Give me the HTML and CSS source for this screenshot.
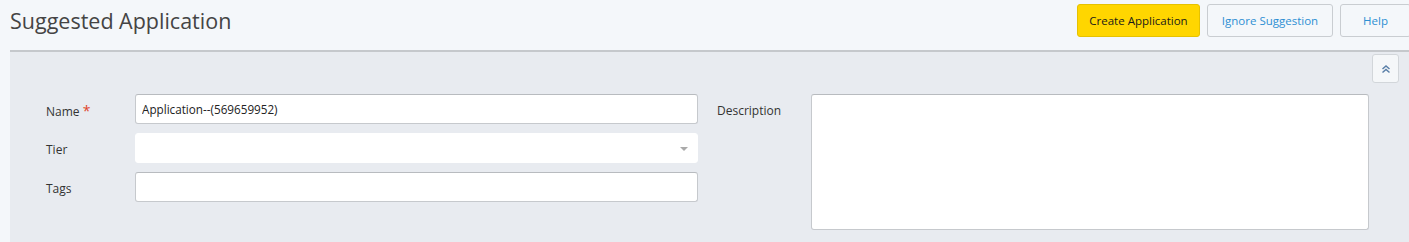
FILE: index.html
```html
<!DOCTYPE html>
<html lang="en">
<head>
    <meta charset="UTF-8">
    <title>Suggested Application</title>
    <link rel="stylesheet" href="styles.css">
</head>
<body>
    <div class="page-header">
        <h1>Suggested Application</h1>
        <div class="actions">
            <button class="btn btn-primary">Create Application</button>
            <button class="btn btn-default">Ignore Suggestion</button>
            <button class="btn btn-default btn-help">Help</button>
        </div>
    </div>

    <div class="panel">
        <div class="panel-tools">
            <button class="collapse-btn" title="Collapse">
                <svg width="10" height="10" viewBox="0 0 10 10">
                    <path d="M1.5 5 L5 2 L8.5 5" fill="none" stroke="#5a7fa8" stroke-width="1.5"/>
                    <path d="M1.5 8.5 L5 5.5 L8.5 8.5" fill="none" stroke="#5a7fa8" stroke-width="1.5"/>
                </svg>
            </button>
        </div>
        <form class="app-form">
            <div class="col col-left">
                <div class="field">
                    <label for="name">Name <span class="req">*</span></label>
                    <input type="text" id="name" value="Application--(569659952)">
                </div>
                <div class="field">
                    <label for="tier">Tier</label>
                    <div class="select">
                        <span class="caret"></span>
                    </div>
                </div>
                <div class="field">
                    <label for="tags">Tags</label>
                    <input type="text" id="tags">
                </div>
            </div>
            <div class="col col-right">
                <div class="field">
                    <label for="description">Description</label>
                    <textarea id="description"></textarea>
                </div>
            </div>
        </form>
    </div>
</body>
</html>
```

FILE: styles.css
```css
body {
    margin: 0;
    background-color: #f4f7fa;
    font-family: "Open Sans", Arial, sans-serif;
    color: #333;
    overflow: hidden;
}

.page-header {
    display: flex;
    justify-content: space-between;
    align-items: flex-start;
    height: 50px;
    padding-left: 10px;
}

h1 {
    margin: 7px 0 0;
    font-size: 21.5px;
    font-weight: 400;
    color: #444;
    line-height: 28px;
}

.actions {
    display: flex;
    gap: 7px;
    padding-top: 4px;
    margin-right: -2px;
}

.btn {
    height: 33px;
    padding: 0;
    border-radius: 3px;
    font-family: "Open Sans", Arial, sans-serif;
    font-size: 11.5px;
    white-space: nowrap;
    cursor: pointer;
}

.btn-primary {
    width: 123px;
    background-color: #ffd600;
    border: 1px solid #e6c200;
    color: #1a1a1a;
}

.btn-default {
    width: 126px;
    background-color: #f4f7fa;
    border: 1px solid #c9cdd1;
    color: #2d8fd3;
}

.btn-help {
    width: 71px;
}

.panel {
    margin-left: 10px;
    border-top: 2px solid #c5c8cc;
    background-color: #e8ebf0;
    height: 200px;
}

.panel-tools {
    display: flex;
    justify-content: flex-end;
    padding: 2px 10px 0 0;
}

.collapse-btn {
    display: flex;
    align-items: center;
    justify-content: center;
    width: 27px;
    height: 29px;
    padding: 0;
    background-color: #f5f7f9;
    border: 1px solid #d2d6da;
    border-radius: 3px;
}

.app-form {
    display: flex;
    gap: 19px;
    padding: 11px 40px 0 36px;
}

.col {
    display: flex;
    flex-direction: column;
    gap: 9px;
}

.col-left {
    width: 652px;
}

.col-right {
    flex: 1;
}

.field {
    display: flex;
    align-items: flex-start;
}

label {
    height: 30px;
    font-size: 12px;
    line-height: 34px;
    color: #333;
}

.col-left label {
    width: 89px;
    flex-shrink: 0;
}

.col-right label {
    width: 94px;
    flex-shrink: 0;
}

.req {
    color: #e0452b;
    font-size: 14px;
}

input, .select, textarea {
    box-sizing: border-box;
    flex: 1;
    height: 30px;
    margin: 0;
    padding: 0 6px;
    background-color: #fff;
    border: 1px solid #c6c9cd;
    border-top-color: #b8bbbf;
    border-radius: 3px;
    font-family: "Open Sans", Arial, sans-serif;
    font-size: 11.7px;
    color: #222;
}

.select {
    position: relative;
    border-color: #fff;
}

.caret {
    position: absolute;
    right: 9px;
    top: 13px;
    border-left: 4px solid transparent;
    border-right: 4px solid transparent;
    border-top: 4px solid #aaa;
}

textarea {
    height: 136px;
    resize: none;
}
```
